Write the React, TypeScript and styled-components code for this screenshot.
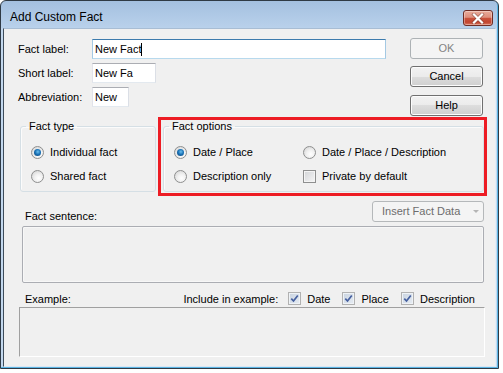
import React from "react";
import styled, { createGlobalStyle } from "styled-components";

const Global = createGlobalStyle`
  html, body { margin: 0; padding: 0; background: #ffffff; }
  body {
    font-family: "Liberation Sans", Arial, sans-serif;
    font-size: 11px;
    color: #000;
  }
  * { box-sizing: border-box; }
`;

const Window = styled.div`
  width: 499px;
  height: 369px;
  border: 1px solid #2f3a45;
  border-radius: 6px 6px 0 0;
  background: linear-gradient(#a4c0e0 0px, #b9d1eb 27px, #c3d8ee 27px, #c3d8ee 100%);
  padding: 0 2px 1px 2px;
  display: flex;
  flex-direction: column;
  box-shadow: inset -1px -1px 0 #5ab4e3;
`;

const TitleBar = styled.div`
  height: 27px;
  display: flex;
  align-items: flex-start;
  justify-content: space-between;
  flex-shrink: 0;
`;

const Title = styled.div`
  font-family: "Liberation Sans", Arial, sans-serif;
  font-size: 12px;
  line-height: 16px;
  padding: 8px 0 0 7px;
  color: #000;
`;

const CloseButton = styled.div`
  width: 30px;
  height: 16px;
  margin: 9px 3px 0 0;
  border: 1px solid #6e2d25;
  border-radius: 3px;
  background: linear-gradient(
    #e9ab9b 0%,
    #de8f7d 45%,
    #c9523c 52%,
    #c24530 80%,
    #d9765e 100%
  );
  box-shadow: inset 0 0 0 1px rgba(255, 255, 255, 0.35);
  display: flex;
  align-items: center;
  justify-content: center;
`;

const Body = styled.div`
  flex: 1;
  background: #f0f0f0;
  border-style: solid;
  border-width: 1px;
  border-color: #a8bdd4 #e4edf6 #dbe7f3 #3e4c5a;
  display: flex;
  flex-direction: column;
`;

const TopRow = styled.div`
  display: flex;
  justify-content: space-between;
  align-items: flex-start;
  padding: 9px 12px 0 14px;
`;

const Fields = styled.div`
  display: flex;
  flex-direction: column;
  gap: 4px;
  padding-top: 1px;
`;

const FieldRow = styled.div`
  display: flex;
  align-items: center;
  height: 20px;
`;

const FieldLabel = styled.div`
  width: 74px;
  line-height: 13px;
`;

const TextBox = styled.div<{ $w: number; $focused?: boolean }>`
  width: ${(p) => p.$w}px;
  height: 20px;
  background: #fff;
  border: 1px solid;
  border-color: ${(p) =>
    p.$focused ? "#3d7bad #a4c9e3 #b7d9ed #a4c9e3" : "#abadb3 #dbdfe6 #e3e9ef #e2e3ea"};
  padding: 0 2px;
  line-height: 18px;
  display: flex;
  align-items: center;
  white-space: nowrap;
`;

const Caret = styled.span`
  display: inline-block;
  width: 1px;
  height: 13px;
  background: #000;
`;

const Buttons = styled.div`
  display: flex;
  flex-direction: column;
  gap: 7px;
`;

const Button = styled.div<{ $disabled?: boolean; $extra?: number }>`
  width: 73px;
  height: 21px;
  margin-top: ${(p) => p.$extra ?? 0}px;
  border: 1px solid ${(p) => (p.$disabled ? "#adb2b5" : "#707070")};
  border-radius: 3px;
  background: ${(p) =>
    p.$disabled
      ? "#f4f4f4"
      : "linear-gradient(#f2f2f2 0%, #ebebeb 50%, #dddddd 50%, #cfcfcf 100%)"};
  box-shadow: ${(p) => (p.$disabled ? "none" : "inset 0 0 0 1px #fcfcfc")};
  color: ${(p) => (p.$disabled ? "#838383" : "#000")};
  display: flex;
  align-items: center;
  justify-content: center;
  line-height: 13px;
`;

const GroupRow = styled.div`
  display: flex;
  align-items: flex-start;
  gap: 2px;
  margin-top: 1px;
  padding-left: 16px;
`;

const GroupBox = styled.fieldset<{ $w: number; $mt?: number }>`
  width: ${(p) => p.$w}px;
  margin: ${(p) => p.$mt ?? 0}px 0 0 0;
  padding: 11px 0 7px 0;
  min-width: 0;
  border: 1px solid #d5dfe5;
  border-radius: 3px;
  box-shadow: inset 1px 1px 0 #fbfbfb;
`;

const Legend = styled.legend`
  margin-left: 5px;
  padding: 0 3px;
  line-height: 13px;
  font-size: 11px;
`;

const OptionStack = styled.div`
  display: flex;
  flex-direction: column;
  gap: 8px;
  padding-left: 10px;
`;

const OptionGrid = styled.div`
  display: grid;
  grid-template-columns: 129px auto;
  row-gap: 8px;
  padding-left: 10px;
`;

const Option = styled.div`
  display: flex;
  align-items: center;
  height: 16px;
  white-space: nowrap;
`;

const Radio = styled.span<{ $checked?: boolean }>`
  width: 13px;
  height: 13px;
  border-radius: 50%;
  border: 1px solid #8e8f8f;
  background: radial-gradient(circle at 60% 65%, #ffffff 0%, #f1f1f1 40%, #cfcfcf 100%);
  margin-right: 6px;
  flex-shrink: 0;
  display: flex;
  align-items: center;
  justify-content: center;
  &::after {
    content: "";
    display: ${(p) => (p.$checked ? "block" : "none")};
    width: 7px;
    height: 7px;
    border-radius: 50%;
    background: radial-gradient(circle at 55% 40%, #6cc0ee 0%, #1a73b8 45%, #083d70 100%);
  }
`;

const CheckBox = styled.span<{ $checked?: boolean; $disabled?: boolean }>`
  width: 13px;
  height: 13px;
  border: 1px solid ${(p) => (p.$disabled ? "#b1b1b1" : "#8e8f8f")};
  background: ${(p) =>
    p.$disabled
      ? "linear-gradient(135deg, #c9d3e0 0%, #e6ecf3 100%)"
      : "linear-gradient(135deg, #d2d4d7 0%, #f6f6f6 100%)"};
  box-shadow: inset 0 0 0 1px ${(p) => (p.$disabled ? "#eef2f6" : "#f4f4f4")};
  margin-right: 6px;
  flex-shrink: 0;
  display: flex;
  align-items: center;
  justify-content: center;
`;

const Highlight = styled.div`
  width: 329px;
  border: 3px solid #ed1c24;
  padding: 0 0 1px 2px;
`;

const SentenceRow = styled.div`
  display: flex;
  justify-content: space-between;
  align-items: flex-end;
  margin-top: 5px;
  padding: 0 11px 0 21px;
`;

const SentenceLabel = styled.div`
  line-height: 13px;
  margin-bottom: -1px;
`;

const Combo = styled.div`
  width: 112px;
  height: 21px;
  border: 1px solid #b5b8ba;
  border-radius: 3px;
  background: #f4f4f4;
  color: #6d6d6d;
  display: flex;
  align-items: center;
  padding-left: 9px;
  padding-right: 4px;
  line-height: 13px;
`;

const ComboArrow = styled.span`
  margin-left: auto;
  width: 0;
  height: 0;
  border-left: 3px solid transparent;
  border-right: 3px solid transparent;
  border-top: 3px solid #b5b5b5;
`;

const SentenceBox = styled.div`
  height: 57px;
  margin: 4px 11px 0 18px;
  border: 1px solid #abadb3;
  border-radius: 2px;
  background: #f0f0f0;
  box-shadow: inset 0 0 0 1px #f7f7f7;
`;

const ExampleRow = styled.div`
  display: flex;
  align-items: center;
  height: 13px;
  margin-top: 9px;
  padding: 0 20px 0 21px;
`;

const IncludeGroup = styled.div`
  margin-left: auto;
  display: flex;
  align-items: center;
  gap: 12px;
`;

const IncludeLabel = styled.span`
  margin-right: -2px;
`;

const CheckItem = styled.div`
  display: flex;
  align-items: center;
  white-space: nowrap;
`;

const ExampleBox = styled.div`
  height: 50px;
  margin: 2px 10px 0 15px;
  border-style: solid;
  border-width: 1px;
  border-color: #a0a0a0 #ffffff #ffffff #a0a0a0;
`;

const CheckMark = () => (
  <svg width="9" height="9" viewBox="0 0 9 9">
    <path d="M1.3 4.6 L3.5 7 L7.8 1.4" fill="none" stroke="#46609f" strokeWidth="1.7" />
  </svg>
);

const CloseGlyph = () => (
  <svg width="14" height="11" viewBox="0 0 14 11">
    <path d="M3 1.5 L11 9.5 M11 1.5 L3 9.5" stroke="#6b3a33" strokeWidth="3.6" strokeLinecap="square" opacity="0.55" />
    <path d="M3 1.5 L11 9.5 M11 1.5 L3 9.5" stroke="#ffffff" strokeWidth="2.2" strokeLinecap="square" />
  </svg>
);

export default function App() {
  return (
    <>
      <Global />
      <Window>
        <TitleBar>
          <Title>Add Custom Fact</Title>
          <CloseButton>
            <CloseGlyph />
          </CloseButton>
        </TitleBar>
        <Body>
          <TopRow>
            <Fields>
              <FieldRow>
                <FieldLabel>Fact label:</FieldLabel>
                <TextBox $w={294} $focused>
                  New Fact
                  <Caret />
                </TextBox>
              </FieldRow>
              <FieldRow>
                <FieldLabel>Short label:</FieldLabel>
                <TextBox $w={64}>New Fa</TextBox>
              </FieldRow>
              <FieldRow>
                <FieldLabel>Abbreviation:</FieldLabel>
                <TextBox $w={37}>New</TextBox>
              </FieldRow>
            </Fields>
            <Buttons>
              <Button $disabled>OK</Button>
              <Button>Cancel</Button>
              <Button $extra={1}>Help</Button>
            </Buttons>
          </TopRow>

          <GroupRow>
            <GroupBox $w={136} $mt={3}>
              <Legend>Fact type</Legend>
              <OptionStack>
                <Option>
                  <Radio $checked />
                  Individual fact
                </Option>
                <Option>
                  <Radio />
                  Shared fact
                </Option>
              </OptionStack>
            </GroupBox>
            <Highlight>
              <GroupBox $w={321}>
                <Legend>Fact options</Legend>
                <OptionGrid>
                  <Option>
                    <Radio $checked />
                    Date / Place
                  </Option>
                  <Option>
                    <Radio />
                    Date / Place / Description
                  </Option>
                  <Option>
                    <Radio />
                    Description only
                  </Option>
                  <Option>
                    <CheckBox />
                    Private by default
                  </Option>
                </OptionGrid>
              </GroupBox>
            </Highlight>
          </GroupRow>

          <SentenceRow>
            <SentenceLabel>Fact sentence:</SentenceLabel>
            <Combo>
              Insert Fact Data
              <ComboArrow />
            </Combo>
          </SentenceRow>
          <SentenceBox />

          <ExampleRow>
            <span>Example:</span>
            <IncludeGroup>
              <IncludeLabel>Include in example:</IncludeLabel>
              <CheckItem>
                <CheckBox $checked $disabled>
                  <CheckMark />
                </CheckBox>
                Date
              </CheckItem>
              <CheckItem>
                <CheckBox $checked $disabled>
                  <CheckMark />
                </CheckBox>
                Place
              </CheckItem>
              <CheckItem>
                <CheckBox $checked $disabled>
                  <CheckMark />
                </CheckBox>
                Description
              </CheckItem>
            </IncludeGroup>
          </ExampleRow>
          <ExampleBox />
        </Body>
      </Window>
    </>
  );
}
